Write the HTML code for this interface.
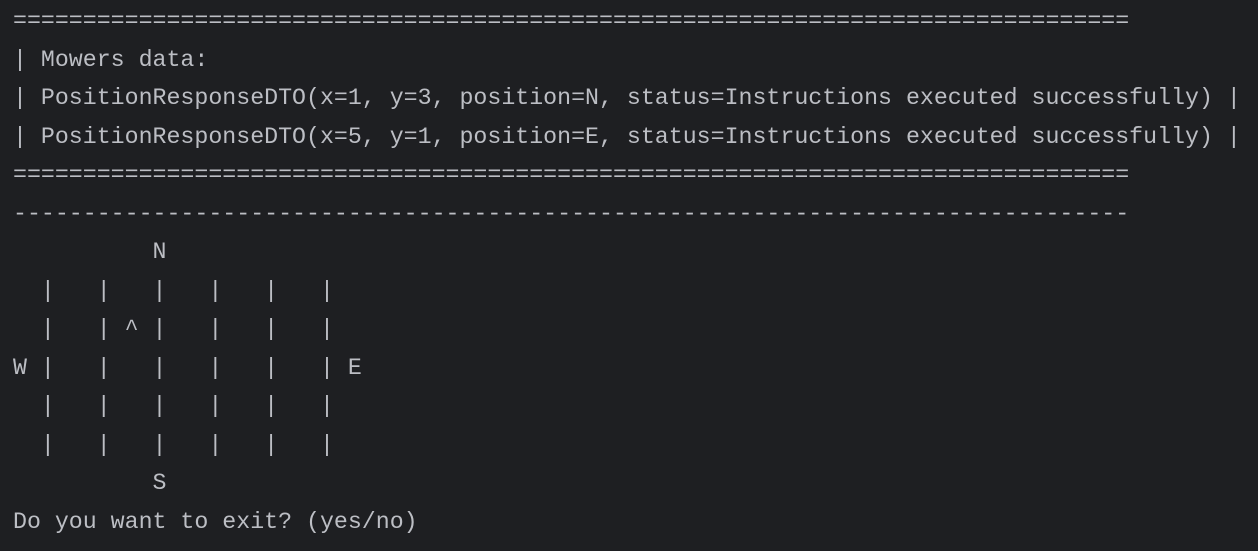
<!DOCTYPE html>
<html><head><meta charset="utf-8"><style>
html,body{margin:0;padding:0;background:#1e1f22;width:1258px;height:551px;overflow:hidden}
pre{margin:0;position:absolute;left:13px;top:2px;font-family:"Liberation Mono",monospace;font-size:23.25px;line-height:38.5px;color:#bcbec4;letter-spacing:0}
</style></head><body><pre>================================================================================
| Mowers data:
| PositionResponseDTO(x=1, y=3, position=N, status=Instructions executed successfully) |
| PositionResponseDTO(x=5, y=1, position=E, status=Instructions executed successfully) |
================================================================================
--------------------------------------------------------------------------------
          N
  |   |   |   |   |   |
  |   | ^ |   |   |   |
W |   |   |   |   |   | E
  |   |   |   |   |   |
  |   |   |   |   |   |
          S
Do you want to exit? (yes/no)</pre></body></html>
